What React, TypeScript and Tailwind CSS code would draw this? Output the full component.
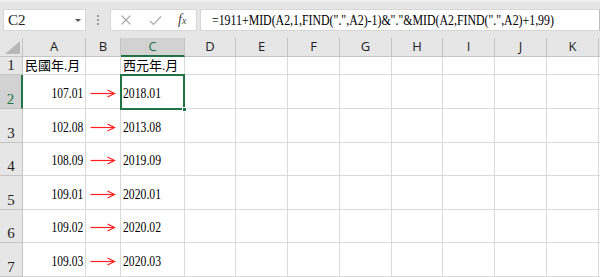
import React from "react";

const cols = ["A", "B", "C", "D", "E", "F", "G", "H", "I", "J", "K"];

const rows: { n: number; h: string; a: string; c: string; arrow: boolean }[] = [
  { n: 1, h: "h-[18px]", a: "民國年.月", c: "西元年.月", arrow: false },
  { n: 2, h: "h-[34px]", a: "107.01", c: "2018.01", arrow: true },
  { n: 3, h: "h-[34px]", a: "102.08", c: "2013.08", arrow: true },
  { n: 4, h: "h-[33px]", a: "108.09", c: "2019.09", arrow: true },
  { n: 5, h: "h-[34px]", a: "109.01", c: "2020.01", arrow: true },
  { n: 6, h: "h-[33px]", a: "109.02", c: "2020.02", arrow: true },
  { n: 7, h: "h-[34px]", a: "109.03", c: "2020.03", arrow: true },
];

const serif = "font-['Liberation_Serif','Noto_Sans_CJK_TC',serif]";
const sans = "font-['Open_Sans','Liberation_Sans',sans-serif]";

function Arrow() {
  return (
    <svg width="26" height="9" viewBox="0 0 26 9" className="block">
      <line x1="0.5" y1="4.5" x2="24" y2="4.5" stroke="#ff2020" strokeWidth="1.2" />
      <polyline points="17.5,1 24.5,4.5 17.5,8" fill="none" stroke="#ff2020" strokeWidth="1.2" />
    </svg>
  );
}

export default function App() {
  return (
    <div className="w-[600px] h-[277px] overflow-hidden bg-white relative">
      {/* Formula bar strip */}
      <div className="h-[38px] bg-[#e6e6e6] flex items-start pt-[7px] border-t-[2px] border-[#f0f0f0]">
        <div className={`shrink-0 ml-[3px] w-[83px] h-[22px] bg-white border border-[#d6d6d6] flex items-center justify-between pl-[4px] pr-[4px] ${serif} text-[15px] text-[#222]`}>
          <span className="mt-[1px]">C2</span>
          <span className="w-0 h-0 border-l-[3px] border-r-[3px] border-t-[3px] border-l-transparent border-r-transparent border-t-[#555]" />
        </div>
        <div className="shrink-0 w-[24px] h-[22px] flex flex-col items-center justify-center gap-[2px]">
          <span className="w-[2px] h-[2px] bg-[#9a9a9a]" />
          <span className="w-[2px] h-[2px] bg-[#9a9a9a]" />
          <span className="w-[2px] h-[2px] bg-[#9a9a9a]" />
        </div>
        <div className="shrink-0 w-[87px] h-[22px] bg-white border border-[#d6d6d6] flex items-center">
          <svg width="12" height="12" viewBox="0 0 12 12" className="ml-[9px]">
            <path d="M1.5 1.5 L10.5 10.5 M10.5 1.5 L1.5 10.5" stroke="#a8a8a8" strokeWidth="1.1" />
          </svg>
          <svg width="13" height="11" viewBox="0 0 13 11" className="ml-[17px]">
            <path d="M1 6 L4.5 9.5 L12 1.5" stroke="#a8a8a8" strokeWidth="1.1" fill="none" />
          </svg>
          <span className={`ml-[16px] ${serif} italic text-[14px] text-[#444] leading-none`}>
            f<span className="text-[10px]">x</span>
          </span>
        </div>
        <div className={`ml-[3px] min-w-0 flex-1 h-[22px] bg-white border border-[#d6d6d6] border-r-[#bcbcbc] flex items-center pl-[11px] overflow-hidden ${serif} text-[15px] text-black whitespace-nowrap`}>
          <span className="inline-block scale-x-[0.79] origin-left">
            =1911+MID(A2,1,FIND(".",A2)-1)&amp;"."&amp;MID(A2,FIND(".",A2)+1,99)
          </span>
        </div>
      </div>

      {/* Grid */}
      <div className="grid grid-cols-[23px_63px_35px_64px_51px_52px_52px_52px_51px_52px_52px_52px_1px]">
        {/* header row */}
        <div className="h-[19px] bg-[#e6e6e6] border-r border-b border-[#c4c4c4] relative overflow-hidden">
          <div className="absolute right-[2px] bottom-[2px] w-0 h-0 [border-bottom:13px_solid_#b8b8b8] [border-left:15px_solid_transparent]" />
        </div>
        {cols.map((c) =>
          c === "C" ? (
            <div
              key={c}
              className={`h-[19px] bg-[#d2d2d2] border-r border-[#c4c4c4] border-b-[2px] border-b-[#217346] flex items-center justify-center ${sans} text-[13px] text-[#217346]`}
            >
              {c}
            </div>
          ) : (
            <div
              key={c}
              className={`h-[19px] bg-[#e6e6e6] border-r border-b border-[#c4c4c4] flex items-center justify-center ${sans} text-[13px] text-[#222]`}
            >
              {c}
            </div>
          )
        )}
        <div className="h-[19px] bg-[#e6e6e6] border-b border-[#c4c4c4]" />

        {rows.map((r) => (
          <React.Fragment key={r.n}>
            <div
              className={`${r.h} ${
                r.n === 2
                  ? "bg-[#d2d2d2] border-r-[2px] border-r-[#217346] text-[#217346]"
                  : "bg-[#e6e6e6] border-r border-r-[#c4c4c4] text-[#222]"
              } border-b border-b-[#c4c4c4] flex items-end justify-center pb-[1px] ${serif} text-[15px] leading-[16px]`}
            >
              {r.n}
            </div>
            <div
              className={`${r.h} border-r border-b border-[#dadada] flex items-center ${
                r.n === 1 ? "justify-start pl-[2px] pt-[1px] text-[13px]" : "justify-end pr-[2px] pt-[3px] text-[15px]"
              } ${serif} text-black whitespace-nowrap`}
            >
              {r.n === 1 ? r.a : <span className="inline-block scale-x-[0.77] origin-right">{r.a}</span>}
            </div>
            <div className={`${r.h} border-r border-b border-[#dadada] flex items-center pl-[4px] pt-[3px]`}>
              {r.arrow && <Arrow />}
            </div>
            <div
              className={`${r.h} border-r border-b border-[#dadada] flex items-center pl-[2px] ${
                r.n === 1 ? "pt-[1px] text-[13px]" : "pt-[3px] text-[15px]"
              } ${serif} text-black whitespace-nowrap`}
            >
              {r.n === 1 ? r.c : <span className="inline-block scale-x-[0.78] origin-left">{r.c}</span>}
            </div>
            {cols.slice(3).map((c) => (
              <div key={c} className={`${r.h} border-r border-b border-[#dadada]`} />
            ))}
            <div className={`${r.h} border-b border-[#dadada]`} />
          </React.Fragment>
        ))}
      </div>

      {/* Selection box on C2 */}
      <div className="absolute left-[120px] top-[74px] w-[65px] h-[36px] border-[2px] border-[#217346] pointer-events-none">
        <div className="absolute right-[-4px] bottom-[-4px] w-[5px] h-[5px] bg-[#217346] border border-white" />
      </div>
    </div>
  );
}
